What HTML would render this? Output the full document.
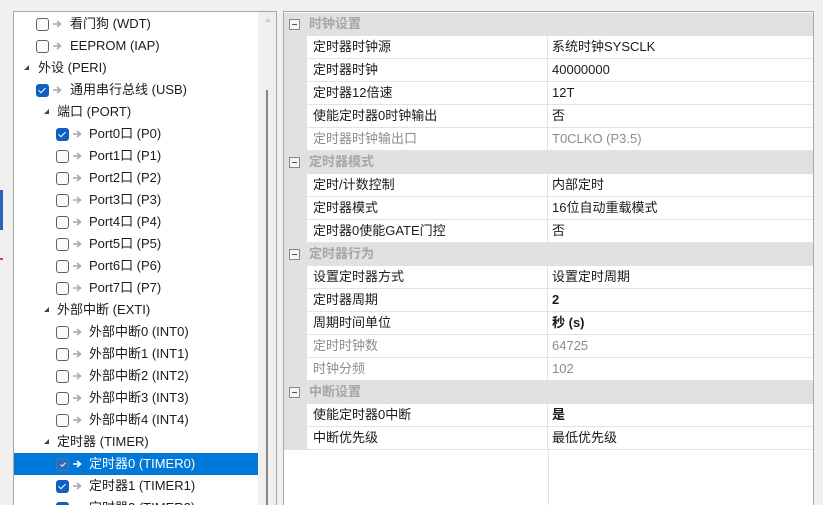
<!DOCTYPE html>
<html><head><meta charset="utf-8"><style>
*{margin:0;padding:0;box-sizing:border-box}
html,body{width:823px;height:505px;overflow:hidden}
body{background:#f0f0f0;font-family:"Liberation Sans","Noto Sans CJK SC",sans-serif;font-size:13px;color:#1b1b1b;position:relative}
.a{position:absolute}
#tree{left:13px;top:11px;width:264px;height:494px;background:#fff;border:1px solid #a8a8a8;border-bottom:none;overflow:hidden}
#sb{left:258px;top:12px;width:18px;height:493px;background:#efefef}
.r{position:absolute;left:0;width:244px;height:22px;line-height:22px;white-space:nowrap}
.r span{position:absolute;top:0}
.cb{position:absolute;top:5px;width:13px;height:13px;border:1.3px solid #606060;border-radius:3px;background:#fbfbfb}
.cb.on{background:#0f5fc0;border-color:#0f5fc0}
.cb.on:after{content:"";position:absolute;left:3px;top:1px;width:3px;height:6px;border:solid #fff;border-width:0 1.4px 1.4px 0;transform:rotate(45deg)}
.ar{position:absolute;top:7px;width:9px;height:8px}
.tri{position:absolute;top:8px;width:0;height:0;border-left:5px solid transparent;border-bottom:5px solid #444}
.sel{background:#0078d7;color:#fff}
#grid{left:283px;top:11px;width:531px;height:494px;background:#fff;border:1px solid #a8a8a8;border-bottom:none;overflow:hidden}
.g{position:absolute;left:0;width:529px;height:23px;line-height:22px;white-space:nowrap}
.h{background:#e1e1e1;color:#a6a6a6;font-weight:bold}
.h .t{left:25px}
.h .m{position:absolute;left:5px;top:6px;width:11px;height:11px;border:1px solid #888;background:#f6f6f6}
.h .m:after{content:"";position:absolute;left:2px;top:4px;width:5px;height:1px;background:#555}
.d{background:#fff}
.d .gut{position:absolute;left:0;top:0;width:23px;height:23px;background:#e1e1e1}
.d .l{position:absolute;left:23px;top:0;width:241px;height:23px;border-bottom:1px solid #e3e3e3;border-right:1px solid #e3e3e3;padding-left:6px}
.d .v{position:absolute;left:264px;top:0;width:265px;height:23px;border-bottom:1px solid #e3e3e3;padding-left:4px}
.g span{position:absolute}
.gr{color:#8c8c8c}
b{font-weight:bold}
</style></head><body>
<div class="a" style="left:0;top:190px;width:3px;height:40px;background:#2a63b0"></div>
<div class="a" style="left:0;top:258px;width:3px;height:2px;background:#d04050"></div>
<div class="a" id="tree">
<div class="r" style="top:1px"><div class="cb" style="left:22px"></div><svg class="ar" style="left:39px" viewBox="0 0 9 8"><path d="M0 4H6M4 1L7.5 4L4 7" stroke="#aaa" stroke-width="1.6" fill="none"/></svg><span style="left:56px">看门狗 (WDT)</span></div>
<div class="r" style="top:23px"><div class="cb" style="left:22px"></div><svg class="ar" style="left:39px" viewBox="0 0 9 8"><path d="M0 4H6M4 1L7.5 4L4 7" stroke="#aaa" stroke-width="1.6" fill="none"/></svg><span style="left:56px">EEPROM (IAP)</span></div>
<div class="r" style="top:45px"><div class="tri" style="left:10px"></div><span style="left:24px">外设 (PERI)</span></div>
<div class="r" style="top:67px"><div class="cb on" style="left:22px"></div><svg class="ar" style="left:39px" viewBox="0 0 9 8"><path d="M0 4H6M4 1L7.5 4L4 7" stroke="#aaa" stroke-width="1.6" fill="none"/></svg><span style="left:56px">通用串行总线 (USB)</span></div>
<div class="r" style="top:89px"><div class="tri" style="left:30px"></div><span style="left:43px">端口 (PORT)</span></div>
<div class="r" style="top:111px"><div class="cb on" style="left:42px"></div><svg class="ar" style="left:59px" viewBox="0 0 9 8"><path d="M0 4H6M4 1L7.5 4L4 7" stroke="#aaa" stroke-width="1.6" fill="none"/></svg><span style="left:75px">Port0口 (P0)</span></div>
<div class="r" style="top:133px"><div class="cb" style="left:42px"></div><svg class="ar" style="left:59px" viewBox="0 0 9 8"><path d="M0 4H6M4 1L7.5 4L4 7" stroke="#aaa" stroke-width="1.6" fill="none"/></svg><span style="left:75px">Port1口 (P1)</span></div>
<div class="r" style="top:155px"><div class="cb" style="left:42px"></div><svg class="ar" style="left:59px" viewBox="0 0 9 8"><path d="M0 4H6M4 1L7.5 4L4 7" stroke="#aaa" stroke-width="1.6" fill="none"/></svg><span style="left:75px">Port2口 (P2)</span></div>
<div class="r" style="top:177px"><div class="cb" style="left:42px"></div><svg class="ar" style="left:59px" viewBox="0 0 9 8"><path d="M0 4H6M4 1L7.5 4L4 7" stroke="#aaa" stroke-width="1.6" fill="none"/></svg><span style="left:75px">Port3口 (P3)</span></div>
<div class="r" style="top:199px"><div class="cb" style="left:42px"></div><svg class="ar" style="left:59px" viewBox="0 0 9 8"><path d="M0 4H6M4 1L7.5 4L4 7" stroke="#aaa" stroke-width="1.6" fill="none"/></svg><span style="left:75px">Port4口 (P4)</span></div>
<div class="r" style="top:221px"><div class="cb" style="left:42px"></div><svg class="ar" style="left:59px" viewBox="0 0 9 8"><path d="M0 4H6M4 1L7.5 4L4 7" stroke="#aaa" stroke-width="1.6" fill="none"/></svg><span style="left:75px">Port5口 (P5)</span></div>
<div class="r" style="top:243px"><div class="cb" style="left:42px"></div><svg class="ar" style="left:59px" viewBox="0 0 9 8"><path d="M0 4H6M4 1L7.5 4L4 7" stroke="#aaa" stroke-width="1.6" fill="none"/></svg><span style="left:75px">Port6口 (P6)</span></div>
<div class="r" style="top:265px"><div class="cb" style="left:42px"></div><svg class="ar" style="left:59px" viewBox="0 0 9 8"><path d="M0 4H6M4 1L7.5 4L4 7" stroke="#aaa" stroke-width="1.6" fill="none"/></svg><span style="left:75px">Port7口 (P7)</span></div>
<div class="r" style="top:287px"><div class="tri" style="left:30px"></div><span style="left:43px">外部中断 (EXTI)</span></div>
<div class="r" style="top:309px"><div class="cb" style="left:42px"></div><svg class="ar" style="left:59px" viewBox="0 0 9 8"><path d="M0 4H6M4 1L7.5 4L4 7" stroke="#aaa" stroke-width="1.6" fill="none"/></svg><span style="left:75px">外部中断0 (INT0)</span></div>
<div class="r" style="top:331px"><div class="cb" style="left:42px"></div><svg class="ar" style="left:59px" viewBox="0 0 9 8"><path d="M0 4H6M4 1L7.5 4L4 7" stroke="#aaa" stroke-width="1.6" fill="none"/></svg><span style="left:75px">外部中断1 (INT1)</span></div>
<div class="r" style="top:353px"><div class="cb" style="left:42px"></div><svg class="ar" style="left:59px" viewBox="0 0 9 8"><path d="M0 4H6M4 1L7.5 4L4 7" stroke="#aaa" stroke-width="1.6" fill="none"/></svg><span style="left:75px">外部中断2 (INT2)</span></div>
<div class="r" style="top:375px"><div class="cb" style="left:42px"></div><svg class="ar" style="left:59px" viewBox="0 0 9 8"><path d="M0 4H6M4 1L7.5 4L4 7" stroke="#aaa" stroke-width="1.6" fill="none"/></svg><span style="left:75px">外部中断3 (INT3)</span></div>
<div class="r" style="top:397px"><div class="cb" style="left:42px"></div><svg class="ar" style="left:59px" viewBox="0 0 9 8"><path d="M0 4H6M4 1L7.5 4L4 7" stroke="#aaa" stroke-width="1.6" fill="none"/></svg><span style="left:75px">外部中断4 (INT4)</span></div>
<div class="r" style="top:419px"><div class="tri" style="left:30px"></div><span style="left:43px">定时器 (TIMER)</span></div>
<div class="r sel" style="top:441px;height:22px"><div class="cb" style="left:42px;background:#2a6cb8;border-color:#3a78c0"></div><svg class="a" style="left:46px;top:9px" width="6" height="5" viewBox="0 0 6 5"><path d="M0.5 2.5L2.3 4.2L5.5 0.8" stroke="#cfe0f3" stroke-width="1.2" fill="none"/></svg><svg class="ar" style="left:59px" viewBox="0 0 9 8"><path d="M0 4H6M4 1L7.5 4L4 7" stroke="#fff" stroke-width="1.6" fill="none"/></svg><span style="left:75px">定时器0 (TIMER0)</span></div>
<div class="r" style="top:463px"><div class="cb on" style="left:42px"></div><svg class="ar" style="left:59px" viewBox="0 0 9 8"><path d="M0 4H6M4 1L7.5 4L4 7" stroke="#aaa" stroke-width="1.6" fill="none"/></svg><span style="left:75px">定时器1 (TIMER1)</span></div>
<div class="r" style="top:485px;height:9px;overflow:hidden"><div class="cb on" style="left:42px"></div><span style="left:75px">定时器2 (TIMER2)</span></div>
</div>
<div class="a" id="sb"></div>
<div class="a" style="left:265px;top:18px;width:0;height:0;border-left:3px solid transparent;border-right:3px solid transparent;border-bottom:4px solid #ccc"></div>
<div class="a" style="left:266px;top:90px;width:2px;height:415px;background:#858585"></div>

<div class="a" id="grid">
<div class="g h" style="top:1px"><div class="m"></div><span class="t">时钟设置</span></div>
<div class="g d" style="top:24px"><div class="gut"></div><div class="l">定时器时钟源</div><div class="v">系统时钟SYSCLK</div></div>
<div class="g d" style="top:47px"><div class="gut"></div><div class="l">定时器时钟</div><div class="v">40000000</div></div>
<div class="g d" style="top:70px"><div class="gut"></div><div class="l">定时器12倍速</div><div class="v">12T</div></div>
<div class="g d" style="top:93px"><div class="gut"></div><div class="l">使能定时器0时钟输出</div><div class="v">否</div></div>
<div class="g d gr" style="top:116px"><div class="gut"></div><div class="l">定时器时钟输出口</div><div class="v">T0CLKO (P3.5)</div></div>
<div class="g h" style="top:139px"><div class="m"></div><span class="t">定时器模式</span></div>
<div class="g d" style="top:162px"><div class="gut"></div><div class="l">定时/计数控制</div><div class="v">内部定时</div></div>
<div class="g d" style="top:185px"><div class="gut"></div><div class="l">定时器模式</div><div class="v">16位自动重载模式</div></div>
<div class="g d" style="top:208px"><div class="gut"></div><div class="l">定时器0使能GATE门控</div><div class="v">否</div></div>
<div class="g h" style="top:231px"><div class="m"></div><span class="t">定时器行为</span></div>
<div class="g d" style="top:254px"><div class="gut"></div><div class="l">设置定时器方式</div><div class="v">设置定时周期</div></div>
<div class="g d" style="top:277px"><div class="gut"></div><div class="l">定时器周期</div><div class="v"><b>2</b></div></div>
<div class="g d" style="top:300px"><div class="gut"></div><div class="l">周期时间单位</div><div class="v"><b>秒 (s)</b></div></div>
<div class="g d gr" style="top:323px"><div class="gut"></div><div class="l">定时时钟数</div><div class="v">64725</div></div>
<div class="g d gr" style="top:346px"><div class="gut"></div><div class="l">时钟分频</div><div class="v">102</div></div>
<div class="g h" style="top:369px"><div class="m"></div><span class="t">中断设置</span></div>
<div class="g d" style="top:392px"><div class="gut"></div><div class="l">使能定时器0中断</div><div class="v"><b>是</b></div></div>
<div class="g d" style="top:415px"><div class="gut"></div><div class="l">中断优先级</div><div class="v">最低优先级</div></div>
<div class="a" style="left:264px;top:438px;width:1px;height:56px;background:#e3e3e3"></div>
</div>
</body></html>
